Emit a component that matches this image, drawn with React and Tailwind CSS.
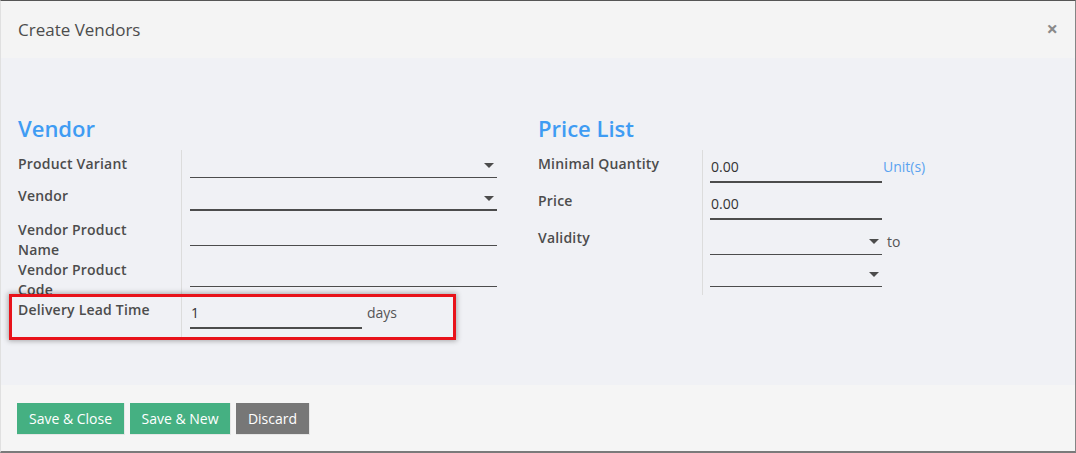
import React from "react";

const font = { fontFamily: "'Open Sans', 'Liberation Sans', sans-serif" };

const Caret = () => (
  <svg width="10" height="5" viewBox="0 0 10 5" className="shrink-0">
    <path d="M0 0 L10 0 L5 5 Z" fill="#4c4c4c" />
  </svg>
);

const Label = ({ children, className = "" }) => (
  <div className={`text-[14px] leading-[20px] font-semibold tracking-[0.2px] text-[#4c4c4c] ${className}`}>{children}</div>
);

const App = () => {
  return (
    <div
      className="w-[1076px] h-[453px] flex flex-col border-t border-t-[#555] border-l border-l-[#e0e0e0] border-r border-r-[#858585] border-b-2 border-b-[#7a7a7a] overflow-hidden"
      style={font}
    >
      {/* Header */}
      <div className="h-[57px] shrink-0 bg-[#f4f4f4] flex items-center justify-between pl-[17px] pr-[17px]">
        <h4 className="text-[17px] text-[#4c4c4c]">Create Vendors</h4>
        <span className="text-[20px] font-bold text-[#8a8a8a] leading-none -mt-[2px]">×</span>
      </div>

      {/* Body */}
      <div className="relative h-[327px] shrink-0 bg-[#f0f1f5] pt-[56px] px-[17px] grid grid-cols-2">
        {/* Vendor */}
        <div>
          <div className="text-[22px] leading-[28px] font-semibold text-[#3f9cf3] mb-[8px]">Vendor</div>
          <div className="flex flex-col">
            <div className="flex h-[36px]">
              <Label className="w-[164px] pt-[4px] border-r border-[#dcdcdc]">Product Variant</Label>
              <div className="ml-[8px] mt-[4px] w-[307px] h-[24px] border-b border-[#4c4c4c] flex items-center justify-end pr-[3px]">
                <Caret />
              </div>
            </div>
            <div className="flex h-[34px]">
              <Label className="w-[164px] pt-[0px] border-r border-[#dcdcdc]">Vendor</Label>
              <div className="ml-[8px] mt-[1px] w-[307px] h-[24px] border-b-2 border-[#4c4c4c] flex items-center justify-end pr-[3px]">
                <Caret />
              </div>
            </div>
            <div className="flex h-[40px]">
              <Label className="w-[164px] border-r border-[#dcdcdc]">Vendor Product<br />Name</Label>
              <div className="ml-[8px] mt-[2px] w-[307px] h-[24px] border-b border-[#4c4c4c]" />
            </div>
            <div className="flex h-[40px]">
              <Label className="w-[164px] border-r border-[#dcdcdc]">Vendor Product<br />Code</Label>
              <div className="ml-[8px] mt-[3px] w-[307px] h-[24px] border-b border-[#4c4c4c]" />
            </div>
            <div className="flex h-[37px]">
              <Label className="w-[164px] border-r border-[#dcdcdc]">Delivery Lead Time</Label>
              <div className="ml-[8px] mt-[5px] flex items-start">
                <div className="w-[172px] h-[24px] border-b-2 border-[#4c4c4c] text-[14px] leading-[16px] text-[#333] pl-[1px]">1</div>
                <span className="ml-[5px] text-[14px] leading-[16px] text-[#555]">days</span>
              </div>
            </div>
          </div>
        </div>

        {/* Price List */}
        <div>
          <div className="text-[22px] leading-[28px] font-semibold text-[#3f9cf3] mb-[8px]">Price List</div>
          <div className="flex flex-col">
            <div className="flex h-[39px]">
              <Label className="w-[165px] pt-[4px] border-r border-[#dcdcdc]">Minimal Quantity</Label>
              <div className="ml-[7px] mt-[9px] flex items-start">
                <div className="w-[172px] h-[24px] border-b-2 border-[#4c4c4c] text-[14px] leading-[16px] text-[#333] pl-[1px]">0.00</div>
                <span className="ml-[1px] text-[14px] leading-[16px] text-[#5aa3f0]">Unit(s)</span>
              </div>
            </div>
            <div className="flex h-[37px]">
              <Label className="w-[165px] pt-[2px] border-r border-[#dcdcdc]">Price</Label>
              <div className="ml-[7px] mt-[7px] w-[172px] h-[24px] border-b-2 border-[#4c4c4c] text-[14px] leading-[16px] text-[#333] pl-[1px]">0.00</div>
            </div>
            <div className="flex h-[69px]">
              <Label className="w-[165px] pt-[2px] border-r border-[#dcdcdc]">Validity</Label>
              <div className="ml-[7px] mt-[5px] flex flex-col gap-[8px]">
                <div className="flex items-center">
                  <div className="w-[172px] h-[24px] border-b border-[#4c4c4c] flex items-center justify-end pr-[3px] pb-[3px]">
                    <Caret />
                  </div>
                  <span className="ml-[5px] text-[14px] leading-[16px] text-[#555] -mt-[3px]">to</span>
                </div>
                <div className="w-[172px] h-[24px] border-b border-[#4c4c4c] flex items-center justify-end pr-[3px]">
                  <Caret />
                </div>
              </div>
            </div>
          </div>
        </div>

        {/* highlight */}
        <div className="absolute left-[8px] top-[236px] w-[447px] h-[46px] border-[3px] border-[#e8121a] shadow-[0_0_5px_1px_rgba(0,0,0,0.3)] pointer-events-none" />
      </div>

      {/* Footer */}
      <div className="flex-1 bg-[#f5f5f5] pt-[18px] pl-[16px] flex items-start gap-[5px]">
        <button className="h-[32px] w-[108px] bg-[#45b082] text-white text-[14px] border-r border-b border-[#e6e6e6]">Save &amp; Close</button>
        <button className="h-[32px] w-[101px] bg-[#45b082] text-white text-[14px] border-r border-b border-[#e6e6e6]">Save &amp; New</button>
        <button className="h-[32px] w-[74px] bg-[#777777] text-white text-[14px] border-r border-b border-[#e6e6e6]">Discard</button>
      </div>
    </div>
  );
};

export default App;
